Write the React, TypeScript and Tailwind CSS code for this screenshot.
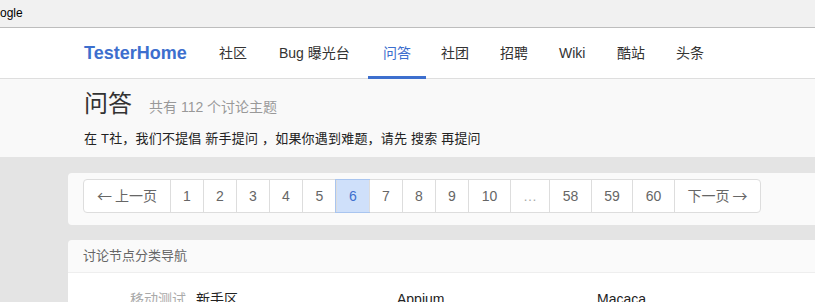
const font = { fontFamily: '"Liberation Sans", "Noto Sans CJK SC", sans-serif' };
const cjk = { fontFamily: '"Noto Sans CJK SC", sans-serif' };

const navItems = [
  { label: '社区', w: 'w-[60px]' },
  { label: 'Bug 曝光台', w: 'w-[104px]' },
  { label: '问答', w: 'w-[58px]', active: true },
  { label: '社团', w: 'w-[59px]' },
  { label: '招聘', w: 'w-[59px]' },
  { label: 'Wiki', w: 'w-[58px]' },
  { label: '酷站', w: 'w-[59px]' },
  { label: '头条', w: 'w-[58px]' },
];

const pages = [
  { label: 'prev', w: 'w-[86px]' },
  { label: '1', w: 'w-[33px]' },
  { label: '2', w: 'w-[33px]' },
  { label: '3', w: 'w-[33px]' },
  { label: '4', w: 'w-[33px]' },
  { label: '5', w: 'w-[34px]' },
  { label: '6', w: 'w-[33px]', active: true },
  { label: '7', w: 'w-[33px]' },
  { label: '8', w: 'w-[33px]' },
  { label: '9', w: 'w-[33px]' },
  { label: '10', w: 'w-[42px]' },
  { label: '…', w: 'w-[39px]', muted: true },
  { label: '58', w: 'w-[42px]' },
  { label: '59', w: 'w-[41px]' },
  { label: '60', w: 'w-[42px]' },
  { label: 'next', w: 'w-[86px]' },
];

export default function App() {
  return (
    <div className="w-[815px] h-[302px] overflow-hidden bg-[#e4e4e4]" style={font}>
      {/* browser bookmark strip */}
      <div className="h-[28px] bg-[#f1f1f1] border-b border-[#bdbdbd] text-[12px] text-black leading-[26px]">ogle</div>

      {/* navbar */}
      <div className="h-[51px] bg-white border-b border-[#dedede] flex items-stretch pl-[84px]">
        <div className="w-[120px] flex items-center text-[18px] font-bold text-[#3d6fce] pt-[1px]">TesterHome</div>
        {navItems.map((n) => (
          <div key={n.label} className={`${n.w} relative flex items-center pl-[15px] text-[14px] text-[#333] pt-[1px]`}>
            <span className={n.active ? 'text-[#3d6fce]' : ''}>{n.label}</span>
            {n.active && <div className="absolute left-0 right-0 bottom-[-1px] h-[3px] bg-[#3d6fce]" />}
          </div>
        ))}
      </div>

      {/* page header */}
      <div className="h-[78px] bg-[#f9f9f9] pl-[84px] pt-[10px]">
        <div className="flex items-baseline">
          <span className="text-[24px] text-[#333] leading-[30px]">问答</span>
          <span className="ml-[17px] text-[14px] text-[#999]">共有 112 个讨论主题</span>
        </div>
        <div className="mt-[11px] text-[13px] tracking-[0.2px] text-[#222] leading-[18px]">在 T社，我们不提倡 新手提问 ，如果你遇到难题，请先 搜索 再提问</div>
      </div>

      {/* pagination card */}
      <div className="ml-[68px] mt-[16px] h-[52px] bg-[#fafafa] rounded-l-[4px] pt-[6px] pl-[15px]">
        <div className="flex h-[34px] w-max bg-white border border-[#dddddd] rounded-[4px] text-[14px] text-[#666]">
          {pages.map((p, i) => (
            <div
              key={i}
              className={`${p.w} flex items-center justify-center ${i > 0 ? 'border-l border-[#dddddd]' : ''} ${p.active ? 'bg-[#cfe0fa] text-[#3d6fce] outline outline-1 outline-[#a9c5ef]' : ''} ${p.muted ? 'text-[#aaa]' : ''}`}
            >
              {p.label === 'prev' ? (
                <>
                  <span style={cjk} className="text-[15px] mr-[3px]">←</span>上一页
                </>
              ) : p.label === 'next' ? (
                <>
                  下一页<span style={cjk} className="text-[15px] ml-[3px]">→</span>
                </>
              ) : (
                p.label
              )}
            </div>
          ))}
        </div>
      </div>

      {/* node nav card */}
      <div className="ml-[68px] mt-[15px] rounded-tl-[4px] overflow-hidden">
        <div className="h-[33px] bg-[#fafafa] border-b border-[#eeeeee] pl-[15px] flex items-center text-[13px] text-[#666]">讨论节点分类导航</div>
        <div className="h-[40px] bg-white text-[14px] relative">
          <div className="absolute top-[16px] left-0 flex">
            <span className="ml-[62px] text-[#aaa]">移动测试</span>
            <span className="ml-[10px] text-[#222]">新手区</span>
            <span className="absolute left-[329px] text-[#222]">Appium</span>
            <span className="absolute left-[529px] text-[#222]">Macaca</span>
          </div>
        </div>
      </div>
    </div>
  );
}
